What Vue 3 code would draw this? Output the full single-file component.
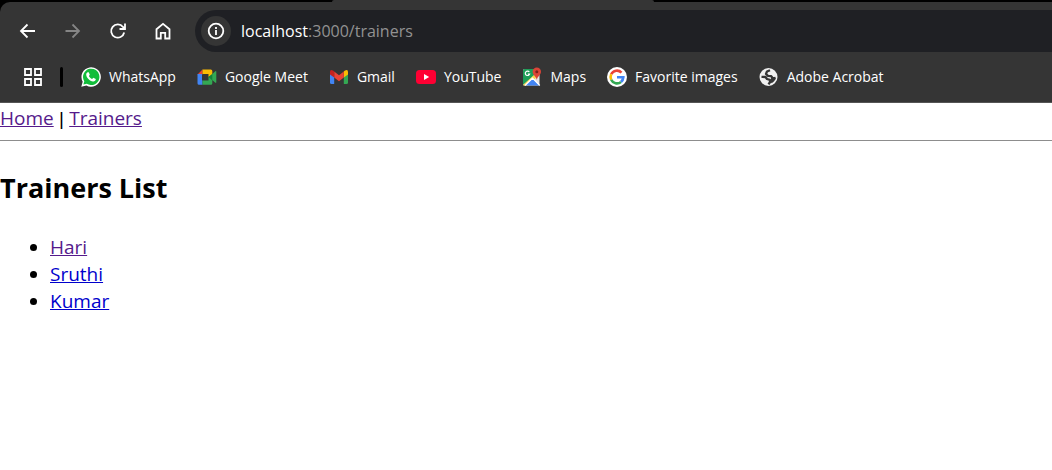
<script setup>
const bookmarks = [
  { id: 'whatsapp', label: 'WhatsApp' },
  { id: 'meet', label: 'Google Meet' },
  { id: 'gmail', label: 'Gmail' },
  { id: 'youtube', label: 'YouTube' },
  { id: 'maps', label: 'Maps' },
  { id: 'google', label: 'Favorite images' },
  { id: 'globe', label: 'Adobe Acrobat' },
]
const trainers = [
  { name: 'Hari', visited: true },
  { name: 'Sruthi', visited: false },
  { name: 'Kumar', visited: false },
]
</script>

<template>
  <div class="browser">
    <header class="chrome">
      <div class="active-tab"></div>
      <div class="toolbar">
        <div class="nav-buttons">
          <button type="button" aria-label="Back">
            <svg viewBox="0 0 20 20"><path d="M17 10H3.500M9.500 3.500 3 10l6.500 6.500" /></svg>
          </button>
          <button type="button" aria-label="Forward" class="disabled" disabled>
            <svg viewBox="0 0 20 20"><path d="M2.500 10H16M9.500 3.500 16 10l-6.500 6.500" /></svg>
          </button>
          <button type="button" aria-label="Reload">
            <svg viewBox="0 0 20 20"><path d="M16.200 11.500A6.600 6.600 0 1 1 15 6L17 8M17 2.500V8h-5.500" /></svg>
          </button>
          <button type="button" aria-label="Home">
            <svg viewBox="0 0 20 20"><path d="M3.500 8.200 10 2.800l6.500 5.400v9.300h-4.300v-5.700H7.800v5.700H3.500z" /></svg>
          </button>
        </div>
        <div class="address">
          <button type="button" class="site-info" aria-label="View site information">
            <svg viewBox="0 0 20 20"><circle cx="10" cy="10" r="7.300" /><path d="M10 9v5M10 6v1.900" /></svg>
          </button>
          <div class="url"><span class="host">localhost</span>:3000/trainers</div>
        </div>
      </div>
      <nav class="bookmarks" aria-label="Bookmarks">
        <button type="button" class="apps" aria-label="Tab groups">
          <svg viewBox="0 0 20 20"><path d="M2 2h6v6H2zM12 2h6v6h-6zM2 12h6v6H2zM12 12h6v6h-6z" /></svg>
        </button>
        <span class="divider"></span>
        <a v-for="b in bookmarks" :key="b.id" href="#" class="bookmark">
          <svg v-if="b.id === 'whatsapp'" viewBox="0 0 20 20">
            <path fill="#fff" d="M0.300 19.700 1.700 14.700A9.700 9.700 0 1 1 5.400 18.400z" />
            <path fill="#12bd3b" d="M2.400 17.600 3.300 14.300A8.200 8.200 0 1 1 5.800 16.800z" />
            <path fill="#fff" d="M6.600 5.300h1.100l1.100 2.500-.9 1.300c.7 1.400 1.700 2.300 3.200 3l1.200-1.300 2.500 1.200c0 1.600-1.200 2.600-2.800 2.500C8.800 14.200 5.300 10.700 5.200 7.500c0-.9.600-1.800 1.400-2.200z" />
          </svg>
          <svg v-else-if="b.id === 'meet'" viewBox="0 0 20 20">
            <path fill="#ea4335" d="M.5 7.500 5.500 2.500v5z" />
            <path fill="#fbbc04" d="M5.500 2.500h8.300q1.500 0 1.500 1.500v3.500L11.500 10V7H5.500z" />
            <path fill="#4285f4" d="M.5 7H5v6.500h.5v4.300H2Q.5 17.800.5 16.300z" />
            <path fill="#34a853" d="M5.500 13.500h6V10l3.800-3 3-2.700q1-.6 1 .5v10.400q0 1-1 .5l-3-2.600v3.200q0 1.500-1.500 1.500H5.500z" />
            <path fill="#188038" d="m11.500 10.100 3.800-3.200v6.500z" />
          </svg>
          <svg v-else-if="b.id === 'gmail'" viewBox="0 0 20 20">
            <path fill="#4285f4" d="M1 5.500 5.200 8.500V17H2.500Q1 17 1 15.500z" />
            <path fill="#34a853" d="M14.800 8.500 19 5.500v10Q19 17 17.500 17h-2.700z" />
            <path fill="#fbbc04" d="M14.800 4.500 16 3.600q3-1.500 3 1.500v2.300l-4.200 3.200z" />
            <path fill="#ea4335" d="M5.200 4.600 10 8.200l4.800-3.600v6L10 14.200l-4.800-3.600z" />
            <path fill="#c5221f" d="M1 5.100q0-3 3-1.500l1.200.9v6.100L1 7.400z" />
          </svg>
          <svg v-else-if="b.id === 'youtube'" viewBox="0 0 20 20">
            <rect y="3" width="20" height="14" rx="3.500" fill="#ff0033" />
            <path fill="#fff" d="m8 7 5.200 3L8 13z" />
          </svg>
          <svg v-else-if="b.id === 'maps'" viewBox="0 0 20 20">
            <rect x="1" y="2" width="16.500" height="16.500" rx="1.500" fill="#e5e5e5" />
            <path fill="#1e9e58" d="M2.500 2h11L13 7.500 1 18V3.500Q1 2 2.500 2z" />
            <path fill="#fbd34c" d="M1 18 13.800 6.500l1.500 3L6 18.500H2z" />
            <path fill="#4285f4" d="m3.500 18.500 7-7 7 7z" />
            <path fill="none" stroke="#fff" stroke-width="1.200" d="m3 18.500 7.500-7.300 7.300 7.300M7.300 5A2.200 2.200 0 1 0 7.600 7H5.800" />
            <path fill="#db4437" d="M14.800.5a4.200 4.200 0 0 1 4.200 4.200c0 3.200-3.300 4.200-4.200 8-.9-3.800-4.200-4.800-4.200-8A4.200 4.200 0 0 1 14.800.5z" />
            <circle cx="14.800" cy="4.700" r="1.500" fill="#7b231c" />
          </svg>
          <svg v-else-if="b.id === 'google'" viewBox="0 0 20 20">
            <circle cx="10" cy="10" r="10" fill="#fff" />
            <g fill="none" stroke-width="2.600">
              <path stroke="#ea4335" d="M4.200 7.300A6.300 6.300 0 0 1 14.500 5.600" />
              <path stroke="#fbbc04" d="M4.200 12.700A6.300 6.300 0 0 1 4.200 7.300" />
              <path stroke="#34a853" d="M14 14.900A6.300 6.300 0 0 1 4.200 12.700" />
              <path stroke="#4285f4" d="M10 10.300h6.300Q16.100 13.300 14 14.900" />
            </g>
          </svg>
          <svg v-else viewBox="0 0 20 20">
            <circle cx="9.500" cy="10" r="9" fill="#f1f1f1" />
            <path fill="none" stroke="#353535" stroke-width="2.300" stroke-linejoin="round" d="M11 3.200 8 4.500 7 7l2 1.800 3.200.4 1.800 2.300 2.500-.5M2.500 9.800l4 .2 1.500 2 2.800.8.300 2.200-1.600 2.300" />
            <path fill="#353535" d="m12.500 10.500 4.300.3q-.8 4-4.300 5.400l-1.500-2.700z" />
          </svg>
          <span>{{ b.label }}</span>
        </a>
      </nav>
    </header>
    <main class="page">
      <nav class="links">
        <a href="#" class="visited">Home</a><span class="separator"> | </span><a href="#" class="visited">Trainers</a>
      </nav>
      <hr />
      <h2>Trainers List</h2>
      <ul>
        <li v-for="t in trainers" :key="t.name">
          <a href="#" :class="{ visited: t.visited }">{{ t.name }}</a>
        </li>
      </ul>
    </main>
  </div>
</template>

<style>
body {
  background: #fff;
}
</style>

<style scoped>
.browser {
  font-family: "Segoe UI", "Open Sans", "Noto Sans", sans-serif;
}
.chrome {
  position: relative;
  padding-top: 2px;
  background: #000;
}
.active-tab {
  position: absolute;
  top: 0;
  left: 332px;
  width: 322px;
  height: 2px;
  background: #353535;
  border-radius: 6px 6px 0 0;
}
button {
  display: flex;
  align-items: center;
  justify-content: center;
  padding: 0;
  border: 0;
  background: none;
  color: #fff;
}
button svg {
  width: 20px;
  height: 20px;
  fill: none;
  stroke: currentColor;
  stroke-width: 1.8;
}
.toolbar {
  display: flex;
  align-items: center;
  gap: 10px;
  padding: 8px 0 0 5px;
  background: #353535;
  border-top-left-radius: 10px;
}
.nav-buttons {
  display: flex;
}
.nav-buttons button {
  width: 45px;
  height: 42px;
}
.nav-buttons .disabled {
  color: #858585;
}
.address {
  flex: 1;
  display: flex;
  align-items: center;
  gap: 10px;
  height: 42px;
  padding-left: 6px;
  border-radius: 21px 0 0 21px;
  background: #1f2024;
}
.site-info {
  width: 30px;
  height: 30px;
  border-radius: 50%;
  background: #353535;
}
.url {
  font-size: 16px;
  line-height: 24px;
  color: #929292;
}
.host {
  color: #fff;
}
.bookmarks {
  display: flex;
  align-items: center;
  height: 51px;
  padding-left: 23px;
  background: #353535;
  border-bottom: 1px solid #555;
  box-sizing: border-box;
}
.divider {
  width: 3px;
  height: 20px;
  margin: 0 18px 0 17px;
  border-radius: 2px;
  background: #000;
}
.bookmark {
  display: flex;
  align-items: center;
  gap: 8px;
  margin-right: 21px;
  color: #fff;
  font-size: 14px;
  line-height: 20px;
  text-decoration: none;
  white-space: nowrap;
}
.bookmark svg {
  flex: none;
  width: 20px;
  height: 20px;
}
.page {
  font-size: 19px;
  line-height: 27px;
  color: #000;
}
.links {
  padding-top: 2px;
}
.separator {
  font-family: "Liberation Sans", sans-serif;
  white-space: pre;
}
.page a {
  color: #00c;
  text-decoration: underline;
}
.page a.visited {
  color: #551a8b;
}
hr {
  margin: 8px 0 0;
  border: 0;
  border-top: 1px solid #8d8d8d;
}
h2 {
  margin: 27px 0 26px;
  font-size: 27px;
  line-height: 40px;
}
ul {
  margin: 0;
  padding-left: 50px;
}
</style>
